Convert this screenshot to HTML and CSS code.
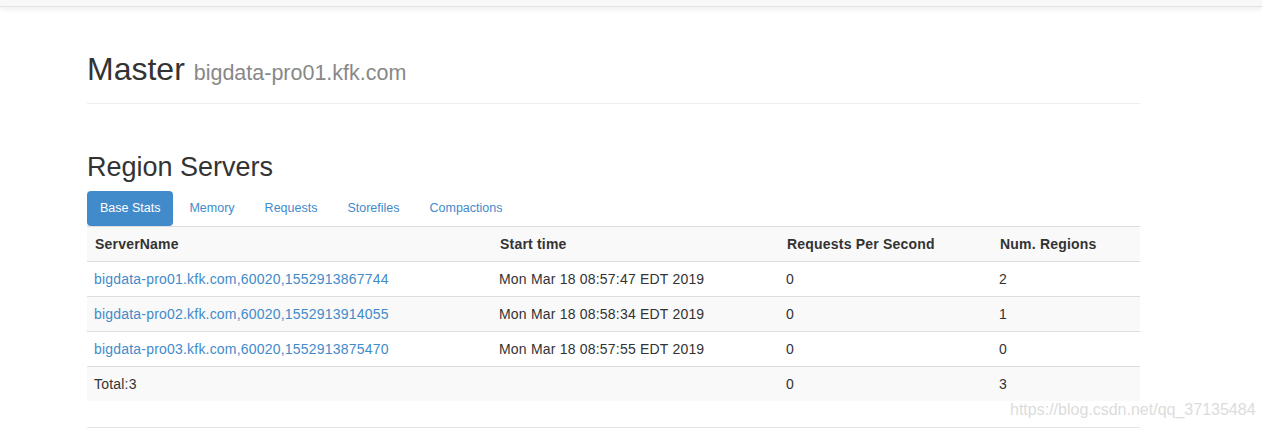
FILE: index.html
```html
<!DOCTYPE html>
<html>
<head>
<meta charset="utf-8">
<link rel="stylesheet" href="styles.css">
</head>
<body>
<div class="navbar"></div>
<div class="container">
  <div class="page-header">
    <h1>Master <small>bigdata-pro01.kfk.com</small></h1>
  </div>
  <section class="section">
    <h2>Region Servers</h2>
    <ul class="nav-pills">
      <li class="active"><a>Base Stats</a></li>
      <li><a>Memory</a></li>
      <li><a>Requests</a></li>
      <li><a>Storefiles</a></li>
      <li><a>Compactions</a></li>
    </ul>
    <table class="table">
      <colgroup><col class="c1"><col class="c2"><col class="c3"><col class="c4"></colgroup>
      <tr><th>ServerName</th><th>Start time</th><th>Requests Per Second</th><th>Num. Regions</th></tr>
      <tr><td><a>bigdata-pro01.kfk.com,60020,1552913867744</a></td><td>Mon Mar 18 08:57:47 EDT 2019</td><td>0</td><td>2</td></tr>
      <tr><td><a>bigdata-pro02.kfk.com,60020,1552913914055</a></td><td>Mon Mar 18 08:58:34 EDT 2019</td><td>0</td><td>1</td></tr>
      <tr><td><a>bigdata-pro03.kfk.com,60020,1552913875470</a></td><td>Mon Mar 18 08:57:55 EDT 2019</td><td>0</td><td>0</td></tr>
      <tr><td>Total:3</td><td></td><td>0</td><td>3</td></tr>
    </table>
  </section>
</div>
<div class="watermark">https://blog.csdn.net/qq_37135484</div>
</body>
</html>
```
FILE: styles.css
```css
html, body {
  margin: 0;
  padding: 0;
  background: #fff;
  overflow: hidden;
}
body {
  font-family: "Liberation Sans", Arial, Helvetica, sans-serif;
  font-size: 14px;
  color: #333;
  position: relative;
  height: 430px;
}
.navbar {
  height: 6px;
  background: #f8f8f8;
  border-bottom: 1px solid #e2e2e2;
  box-shadow: 0 2px 6px rgba(0,0,0,0.08);
}
.container {
  width: 1053px;
  margin-left: 87px;
}
.page-header {
  margin-top: 45px;
  padding-bottom: 16px;
  border-bottom: 1px solid #eee;
}
h1 {
  margin: 0;
  height: 35px;
  font-size: 32px;
  font-weight: 500;
  line-height: 35px;
  color: #333;
}
h1 small {
  font-size: 21.5px;
  line-height: 0;
  font-weight: normal;
  color: #888;
}
h2 {
  margin: 48px 0 9px;
  font-size: 27px;
  font-weight: 500;
  line-height: 30px;
  color: #333;
}
.nav-pills {
  list-style: none;
  margin: 0;
  padding: 0;
  display: flex;
  gap: 2px;
}
.nav-pills a {
  display: block;
  padding: 10px 14px;
  font-size: 12.5px;
  line-height: 15px;
  color: #428bca;
  border-radius: 4px;
}
.nav-pills .active a {
  background: #428bca;
  color: #fff;
  padding: 10px 13px;
}
.section {
  padding-bottom: 26px;
  border-bottom: 1px solid #e5e5e5;
}
.table {
  width: 100%;
  border-collapse: collapse;
  table-layout: fixed;
}
.c1 { width: 405px; }
.c2 { width: 287px; }
.c3 { width: 213px; }
.c4 { width: 148px; }
.table th, .table td {
  text-align: left;
  padding: 7px 8px 7px 7px;
  line-height: 20px;
  border-top: 1px solid #ddd;
  font-size: 14px;
  letter-spacing: 0.2px;
}
.table th {
  font-weight: bold;
  padding-left: 8px;
}
.table tr:nth-child(odd) {
  background: #f9f9f9;
}
.table a {
  color: #428bca;
}
.watermark {
  position: absolute;
  left: 1010px;
  top: 401px;
  font-size: 16px;
  color: #dcdcdc;
  white-space: nowrap;
}
```
